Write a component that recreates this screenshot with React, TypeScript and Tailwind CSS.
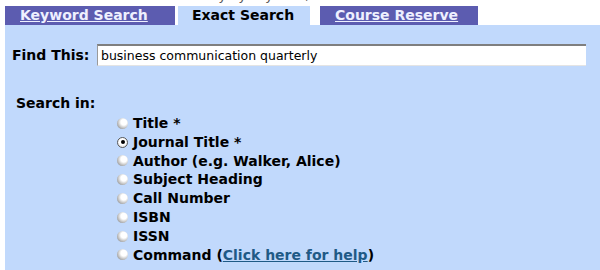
import React from "react";

const options = [
  { label: "Title *" },
  { label: "Journal Title *", checked: true },
  { label: "Author (e.g. Walker, Alice)" },
  { label: "Subject Heading" },
  { label: "Call Number" },
  { label: "ISBN" },
  { label: "ISSN" },
];

function Radio({ checked }: { checked?: boolean }) {
  if (checked) {
    return (
      <span className="w-[11px] h-[11px] rounded-full border border-[#5a5a5a] bg-[radial-gradient(circle_at_50%_40%,#ffffff_45%,#d0d0d0_100%)] flex items-center justify-center shrink-0">
        <span className="w-[4px] h-[4px] rounded-full bg-black" />
      </span>
    );
  }
  return (
    <span className="w-[11px] h-[11px] rounded-full bg-[radial-gradient(circle_at_62%_38%,#ffffff_30%,#b8b8b8_65%,#6e6e6e_100%)] shrink-0" />
  );
}

export default function App() {
  return (
    <div
      className="w-[600px] h-[270px] bg-white overflow-hidden flex flex-col"
      style={{ fontFamily: '"DejaVu Sans", Verdana, sans-serif' }}
    >
      <div className="h-[6px] overflow-hidden shrink-0">
        <div className="mt-[-11px] pl-[110px] text-[13px] leading-[14px] text-[#555]">
          Search the library by keyword, exact title or course reserve
        </div>
      </div>
      <div className="flex h-[19px] shrink-0 pl-[5px] text-[14px] font-bold leading-[19px]">
        <div className="w-[170px] bg-[#5c5cb0] pl-[15px]">
          <span className="text-[#eef0ff] underline">Keyword Search</span>
        </div>
        <div className="w-[132px] ml-[3px] bg-[#c1d9fc] pl-[14px] text-black">
          Exact Search
        </div>
        <div className="w-[158px] ml-[10px] bg-[#5c5cb0] pl-[15px]">
          <span className="text-[#eef0ff] underline">Course Reserve</span>
        </div>
      </div>
      <div className="flex-1 ml-[5px] bg-[#c1d9fc] pt-[19px] pl-[7px]">
        <div className="flex items-center h-[22px]">
          <span className="text-[14px] font-bold text-black w-[85px]">Find This:</span>
          <div className="w-[489px] h-[22px] bg-white border-t-2 border-t-[#7f7f7f] border-l border-l-[#9a9a9a] border-b border-b-[#e4e4e4] pl-[3px] text-[12.5px] leading-[19px] text-black">
            business communication quarterly
          </div>
        </div>
        <div className="mt-[28px] pl-[4px] text-[14px] font-bold leading-[19px] text-black">
          Search in:
        </div>
        <div className="mt-[1px] pl-[105px] text-[14px] font-bold leading-[18.8px] text-black">
          {options.map((o) => (
            <div key={o.label} className="flex items-center gap-[5px] h-[18.8px]">
              <Radio checked={o.checked} />
              <span>{o.label}</span>
            </div>
          ))}
          <div className="flex items-center gap-[5px] h-[18.8px]">
            <Radio />
            <span>
              Command (
              <span className="text-[#1f5a86] underline">Click here for help</span>)
            </span>
          </div>
        </div>
      </div>
    </div>
  );
}
